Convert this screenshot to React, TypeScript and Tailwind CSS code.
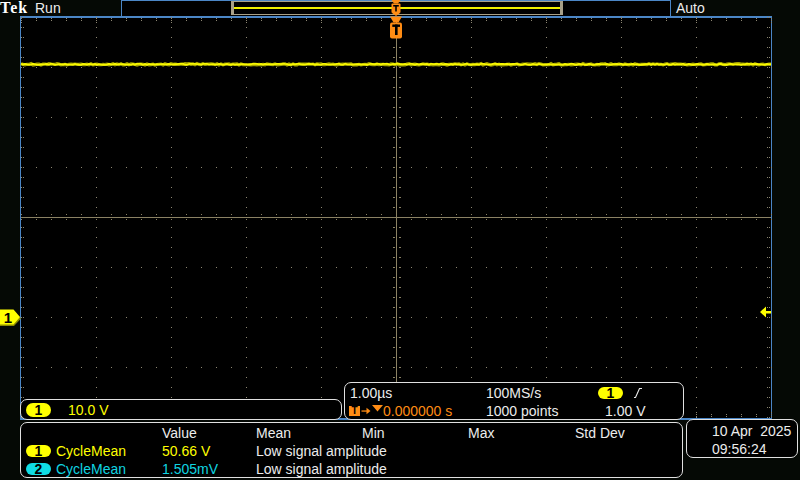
import React from "react";

const DOT = "#8c8672";
const CLINE = "#8b8264";
const ORANGE = "#ff8c14";

function makeRng(seed: number) {
  let s = seed >>> 0;
  return () => {
    s = (Math.imul(s, 1664525) + 1013904223) >>> 0;
    return s / 4294967296;
  };
}

function Graticule() {
  const dots: React.ReactElement[] = [];
  let key = 0;
  const d = (x: number, y: number, w = 1, h = 1, c = DOT) =>
    dots.push(<rect key={key++} x={x} y={y} width={w} height={h} fill={c} />);

  for (let k = 1; k <= 9; k++) {
    if (k === 5) continue;
    const x = 21 + 75 * k;
    for (let j = 0; j <= 40; j++) d(x, 17 + 10 * j);
  }
  for (let k = 1; k <= 7; k++) {
    if (k === 4) continue;
    const y = 17 + 50 * k;
    for (let i = 0; i <= 50; i++) d(21 + 15 * i, y);
  }
  for (let j = 0; j <= 40; j++) {
    const y = 17 + 10 * j;
    d(21, y);
    d(23, y);
    d(767, y);
    d(769, y);
  }
  for (let i = 0; i <= 50; i++) {
    const x = 21 + 15 * i;
    d(x, 18);
    d(x, 20);
    d(x, 414);
    d(x, 416);
    if (i % 5 === 0) {
      d(x, 22);
      d(x, 412);
    }
  }
  for (let i = 0; i <= 50; i++) {
    const x = 21 + 15 * i;
    d(x, 214, 1, 1, CLINE);
    d(x, 219, 1, 1, CLINE);
  }
  for (let j = 0; j <= 40; j++) {
    const y = 17 + 10 * j;
    d(393, y, 2, 1, CLINE);
    d(399, y, 2, 1, CLINE);
  }

  const rnd = makeRng(12345);
  const pts: string[] = [];
  const pts2: string[] = [];
  for (let x = 21; x <= 771; x += 2) {
    const n = (rnd() - 0.5) * 1.4;
    pts.push(`${x},${(64.3 + n).toFixed(2)}`);
    const n2 = (rnd() - 0.5) * 1.2;
    pts2.push(`${x},${(64.3 + n2).toFixed(2)}`);
  }

  return (
    <svg width={750} height={400} viewBox="21 18 750 400" className="block overflow-visible">
      <g shapeRendering="crispEdges">
        {dots}
        <rect x={21} y={217} width={750} height={1} fill={CLINE} />
        <rect x={396} y={17} width={1} height={400} fill={CLINE} />
      </g>
      <polyline points={pts.join(" ")} fill="none" stroke="#a4a200" strokeWidth={3.2} />
      <polyline points={pts2.join(" ")} fill="none" stroke="#f8f800" strokeWidth={1.8} />
      <polygon points="760,312 766,306.5 766,311 771,311 771,313.5 766,313.5 766,317.5" fill="#ffff00" />
      <polygon points="390,16.5 402,16.5 398.5,22.5 393.5,22.5" fill={ORANGE} />
      <rect x={390} y={22.5} width={12} height={16} rx={2} fill={ORANGE} />
      <rect x={392.3} y={24.5} width={7.7} height={2.4} fill="#000" />
      <rect x={395} y={24.5} width={2.6} height={10.5} fill="#000" />
    </svg>
  );
}

function Badge({ n, cls, h }: { n: string; cls: string; h: string }) {
  return (
    <span
      className={`inline-flex items-center justify-center w-[25px] ${h} rounded-full text-black text-[14px] font-bold leading-none ${cls}`}
    >
      {n}
    </span>
  );
}

export default function App() {
  return (
    <div className="w-[800px] h-[480px] overflow-hidden bg-[#050905] text-[14px] leading-[18px] text-[#ececec] flex flex-col font-['Liberation_Sans',Arial,sans-serif]">
      {/* top bar */}
      <div className="h-[16px] flex relative shrink-0">
        <div className="w-[121px] flex items-center">
          <span className="inline-block w-[35px] font-['Liberation_Serif',serif] font-bold text-[16px] leading-none tracking-[1px] text-white">
            Tek
          </span>
          <span className="leading-none text-[14px]">Run</span>
        </div>
        <div className="w-[550px] border-x border-t border-[#4b86c6] flex pl-[109px] bg-black">
          <div className="w-[332px] h-[14px] border-x-[3px] border-y border-[#a8a088] flex items-center">
            <div className="h-[1.5px] w-full bg-[#f0f000]" />
          </div>
        </div>
        <div className="pl-[5px] leading-[16px]">Auto</div>
        <svg width={10} height={16} viewBox="0 0 10 16" className="absolute left-[391px] top-0">
          <polygon points="0.5,0 9.5,0 7,3.5 3,3.5" fill={ORANGE} />
          <rect x={0.5} y={3.5} width={9} height={9.5} rx={1} fill={ORANGE} />
          <rect x={2.2} y={5} width={5.6} height={1.6} fill="#000" />
          <rect x={4.2} y={5} width={1.6} height={6.5} fill="#000" />
          <polygon points="1,13 9,13 5,16" fill={ORANGE} />
        </svg>
      </div>

      {/* graticule row */}
      <div className="flex h-[404px] shrink-0">
        <div className="w-[20px] relative">
          <svg width={21} height={18} viewBox="0 0 21 18" className="absolute left-0 top-[293px]">
            <polygon points="0,2 14,2 21,9.5 14,17 0,17" fill="#8a8a00" />
            <polygon points="0,0.5 13.5,0.5 20,8 13.5,15.5 0,15.5" fill="#ffff00" />
            <text
              x={8}
              y={13.5}
              textAnchor="middle"
              fontFamily="Liberation Sans, Arial, sans-serif"
              fontWeight="bold"
              fontSize={15}
              fill="#000"
            >
              1
            </text>
          </svg>
        </div>
        <div className="w-[752px] h-[404px] border-x border-y-2 border-[#4b86c6] bg-black">
          <Graticule />
        </div>
      </div>

      {/* bottom panels */}
      <div className="-mt-[38px] flex flex-col">
        <div className="flex items-end h-[38px]">
          <div className="ml-[20px] w-[322px] h-[21px] border border-[#e0e0e0] rounded-[7px] bg-black flex items-center pl-[5px]">
            <Badge n="1" cls="bg-[#ffff00]" h="h-[14px]" />
            <span className="ml-[17px] text-[#ffff00]">10.0 V</span>
          </div>
          <div className="ml-[2px] w-[340px] h-[38px] border border-[#e0e0e0] rounded-[7px] bg-black pl-[5px] pt-px grid grid-cols-[136px_112px_1fr] auto-rows-[18px]">
            <div className="flex items-center">1.00µs</div>
            <div className="flex items-center">100MS/s</div>
            <div className="flex items-center">
              <Badge n="1" cls="bg-[#ffff00]" h="h-[12px]" />
              <svg width={8} height={10} viewBox="0 0 8 10" className="ml-[11px]">
                <polyline points="0,9.5 1.5,9.5 5.5,0.5 8,0.5" fill="none" stroke="#e8e8e8" strokeWidth={1.1} />
              </svg>
            </div>
            <div className="flex items-center -ml-px text-[#ff8c14]">
              <span className="inline-flex items-center justify-center w-[11px] h-[10px] bg-[#ff8c14] text-black text-[10px] font-bold leading-none">
                T
              </span>
              <svg width={10} height={8} viewBox="0 0 10 8" className="ml-[1px]">
                <rect x={0.5} y={3.4} width={6} height={1.3} fill={ORANGE} />
                <polygon points="5.5,0.8 9.5,4 5.5,7.2" fill={ORANGE} />
              </svg>
              <svg width={11} height={7} viewBox="0 0 11 7" className="ml-[1px] -mt-[5px]">
                <polygon points="0,0 11,0 5.5,6.5" fill={ORANGE} />
              </svg>
              <span>0.000000 s</span>
            </div>
            <div className="flex items-center">1000 points</div>
            <div className="flex items-center pl-[7px]">1.00 V</div>
          </div>
        </div>
        <div className="flex items-start">
          <div className="ml-[20px] mt-[2px] w-[663px] h-[56px] border border-[#e0e0e0] rounded-[7px] bg-black pl-[5px] pt-px grid grid-cols-[136px_94px_106px_106px_107px_1fr] auto-rows-[18px] whitespace-nowrap">
            <div />
            <div className="flex items-center">Value</div>
            <div className="flex items-center">Mean</div>
            <div className="flex items-center">Min</div>
            <div className="flex items-center">Max</div>
            <div className="flex items-center">Std Dev</div>

            <div className="flex items-center">
              <Badge n="1" cls="bg-[#ffff00]" h="h-[12px]" />
              <span className="ml-[5px] text-[#ffff00]">CycleMean</span>
            </div>
            <div className="flex items-center text-[#ffff00]">50.66 V</div>
            <div className="flex items-center col-span-4">Low signal amplitude</div>

            <div className="flex items-center">
              <Badge n="2" cls="bg-[#10dce4]" h="h-[12px]" />
              <span className="ml-[5px] text-[#10d4e0]">CycleMean</span>
            </div>
            <div className="flex items-center text-[#10d4e0]">1.505mV</div>
            <div className="flex items-center col-span-4">Low signal amplitude</div>
          </div>
          <div className="ml-[3px] -mt-px w-[112px] h-[39px] border border-[#e0e0e0] rounded-[7px] bg-black pl-[25px] pt-[2px] whitespace-pre">
            <div className="h-[18px] flex items-center">10 Apr  2025</div>
            <div className="h-[17px] flex items-center">09:56:24</div>
          </div>
        </div>
      </div>
    </div>
  );
}
